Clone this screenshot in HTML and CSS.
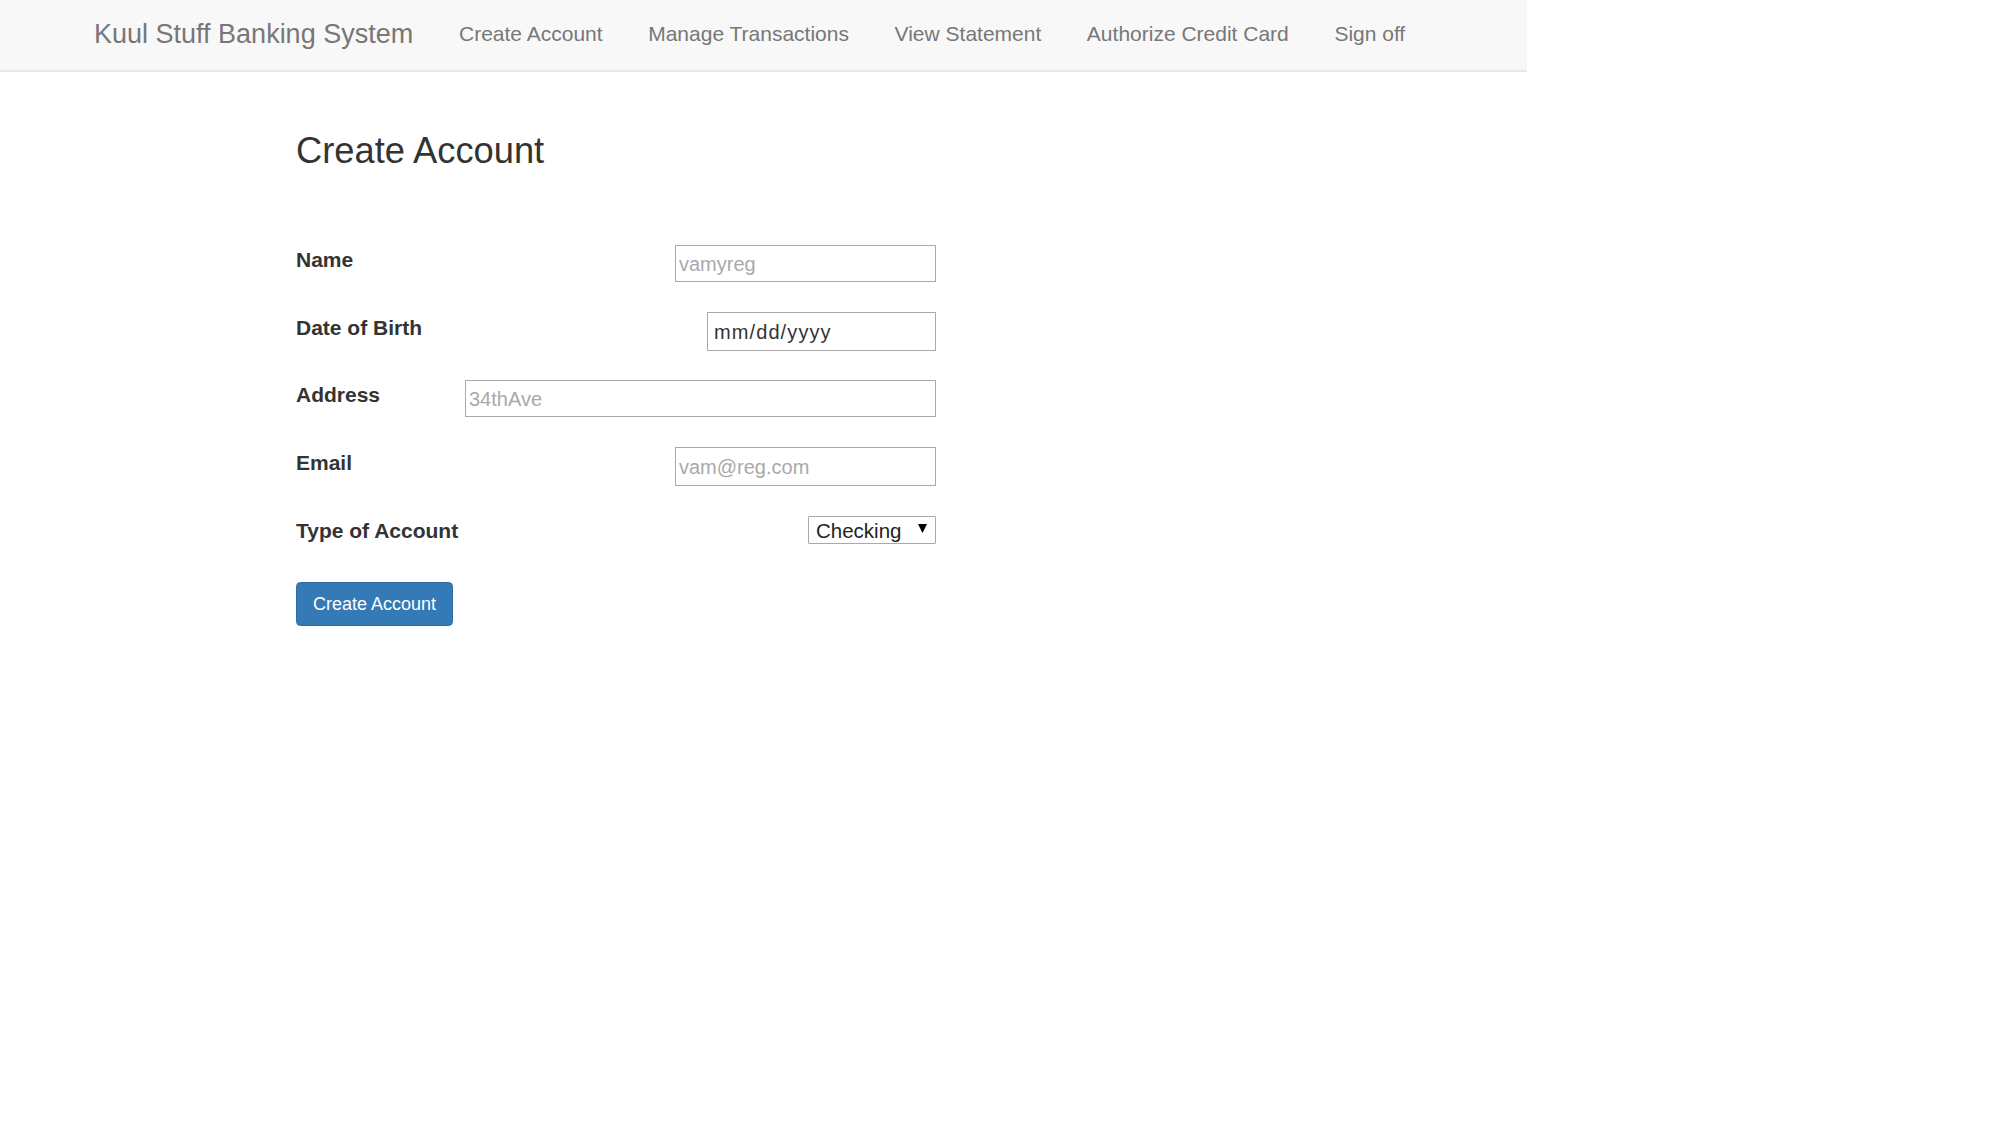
FILE: index.html
```html
<!DOCTYPE html>
<html lang="en">
<head>
<meta charset="utf-8">
<title>Kuul Stuff Banking System</title>
<link rel="stylesheet" href="styles.css">
</head>
<body>
<nav class="navbar">
  <a class="brand" href="#">Kuul Stuff Banking System</a>
  <ul class="nav">
    <li><a href="#">Create Account</a></li>
    <li><a href="#">Manage Transactions</a></li>
    <li><a href="#">View Statement</a></li>
    <li><a href="#">Authorize Credit Card</a></li>
    <li><a href="#">Sign off</a></li>
  </ul>
</nav>
<main class="content">
  <h3 class="title">Create Account</h3>
  <form class="form">
    <div class="row">
      <label class="label">Name</label>
      <input class="field field-std" type="text" placeholder="vamyreg">
    </div>
    <div class="row">
      <label class="label">Date of Birth</label>
      <input class="field field-date" type="text" value="mm/dd/yyyy">
    </div>
    <div class="row">
      <label class="label">Address</label>
      <input class="field field-wide" type="text" placeholder="34thAve">
    </div>
    <div class="row">
      <label class="label">Email</label>
      <input class="field field-std field-tall" type="text" placeholder="vam@reg.com">
    </div>
    <div class="row">
      <label class="label label-type">Type of Account</label>
      <span class="select-wrap">
        <select class="select">
          <option>Checking</option>
          <option>Savings</option>
        </select>
        <svg class="select-arrow" width="9" height="9" viewBox="0 0 9 9"><polygon points="0,0 9,0 4.5,9" fill="#000"/></svg>
      </span>
    </div>
    <button class="btn" type="button">Create Account</button>
  </form>
</main>
</body>
</html>
```
FILE: styles.css
```css
* { box-sizing: border-box; }
html, body { margin: 0; padding: 0; background: #fff; }
body {
  font-family: "Liberation Sans", Arial, Helvetica, sans-serif;
  color: #333;
}
.navbar {
  width: 1527px;
  height: 72px;
  background: #f8f8f8;
  border-bottom: 2px solid #e7e7e7;
  display: flex;
  align-items: center;
  padding: 0 0 3px 71.5px;
}
.brand {
  font-size: 27px;
  line-height: 40px;
  color: #777;
  text-decoration: none;
  padding: 0 23px 0 22.5px;
}
.nav {
  list-style: none;
  margin: 0;
  padding: 0;
  display: flex;
  align-items: center;
}
.nav a {
  display: block;
  font-size: 21px;
  line-height: 30px;
  color: #777;
  text-decoration: none;
  padding: 0 22.8px;
}
.content {
  padding: 58.7px 0 0 296px;
}
.title {
  margin: 0 0 74.7px;
  font-size: 36.3px;
  font-weight: 500;
  line-height: 39.6px;
  color: #333;
}
.form { width: 640px; }
.row {
  display: flex;
  justify-content: space-between;
  align-items: flex-start;
  height: 67.5px;
}
.label {
  font-size: 21px;
  font-weight: bold;
  line-height: 30px;
  color: #333;
  margin-top: 0.5px;
}
.label-type { margin-top: 1px; }
.field {
  height: 37px;
  border: 1px solid #a9a9a9;
  border-radius: 0;
  background: #fff;
  font-family: "Liberation Sans", Arial, Helvetica, sans-serif;
  font-size: 20px;
  color: #333;
  padding: 2px 3px 0;
  outline: none;
}
.field::placeholder { color: #a9a9a9; opacity: 1; }
.field-std { width: 261px; }
.field-tall { height: 39px; }
.field-date {
  width: 229px;
  height: 39px;
  padding: 2px 6px 0;
  letter-spacing: 1.1px;
}
.field-wide { width: 471px; }
.select-wrap {
  position: relative;
  display: inline-block;
  margin-top: 1px;
}
.select {
  -webkit-appearance: none;
  appearance: none;
  display: block;
  width: 128px;
  height: 28px;
  border: 1px solid #a9a9a9;
  border-radius: 1px;
  background: #fff;
  font-family: "Liberation Sans", Arial, Helvetica, sans-serif;
  font-size: 20.5px;
  color: #222;
  padding: 2px 0 0 7px;
  outline: none;
}
.select-arrow {
  position: absolute;
  right: 9px;
  top: 8px;
  pointer-events: none;
}
.btn {
  display: block;
  width: 157px;
  height: 44px;
  padding: 0 15px;
  background: #337ab7;
  border: 1px solid #2e6da4;
  border-radius: 4.5px;
  color: #fff;
  font-family: "Liberation Sans", Arial, Helvetica, sans-serif;
  font-size: 18px;
  line-height: 27px;
  cursor: pointer;
}
```
